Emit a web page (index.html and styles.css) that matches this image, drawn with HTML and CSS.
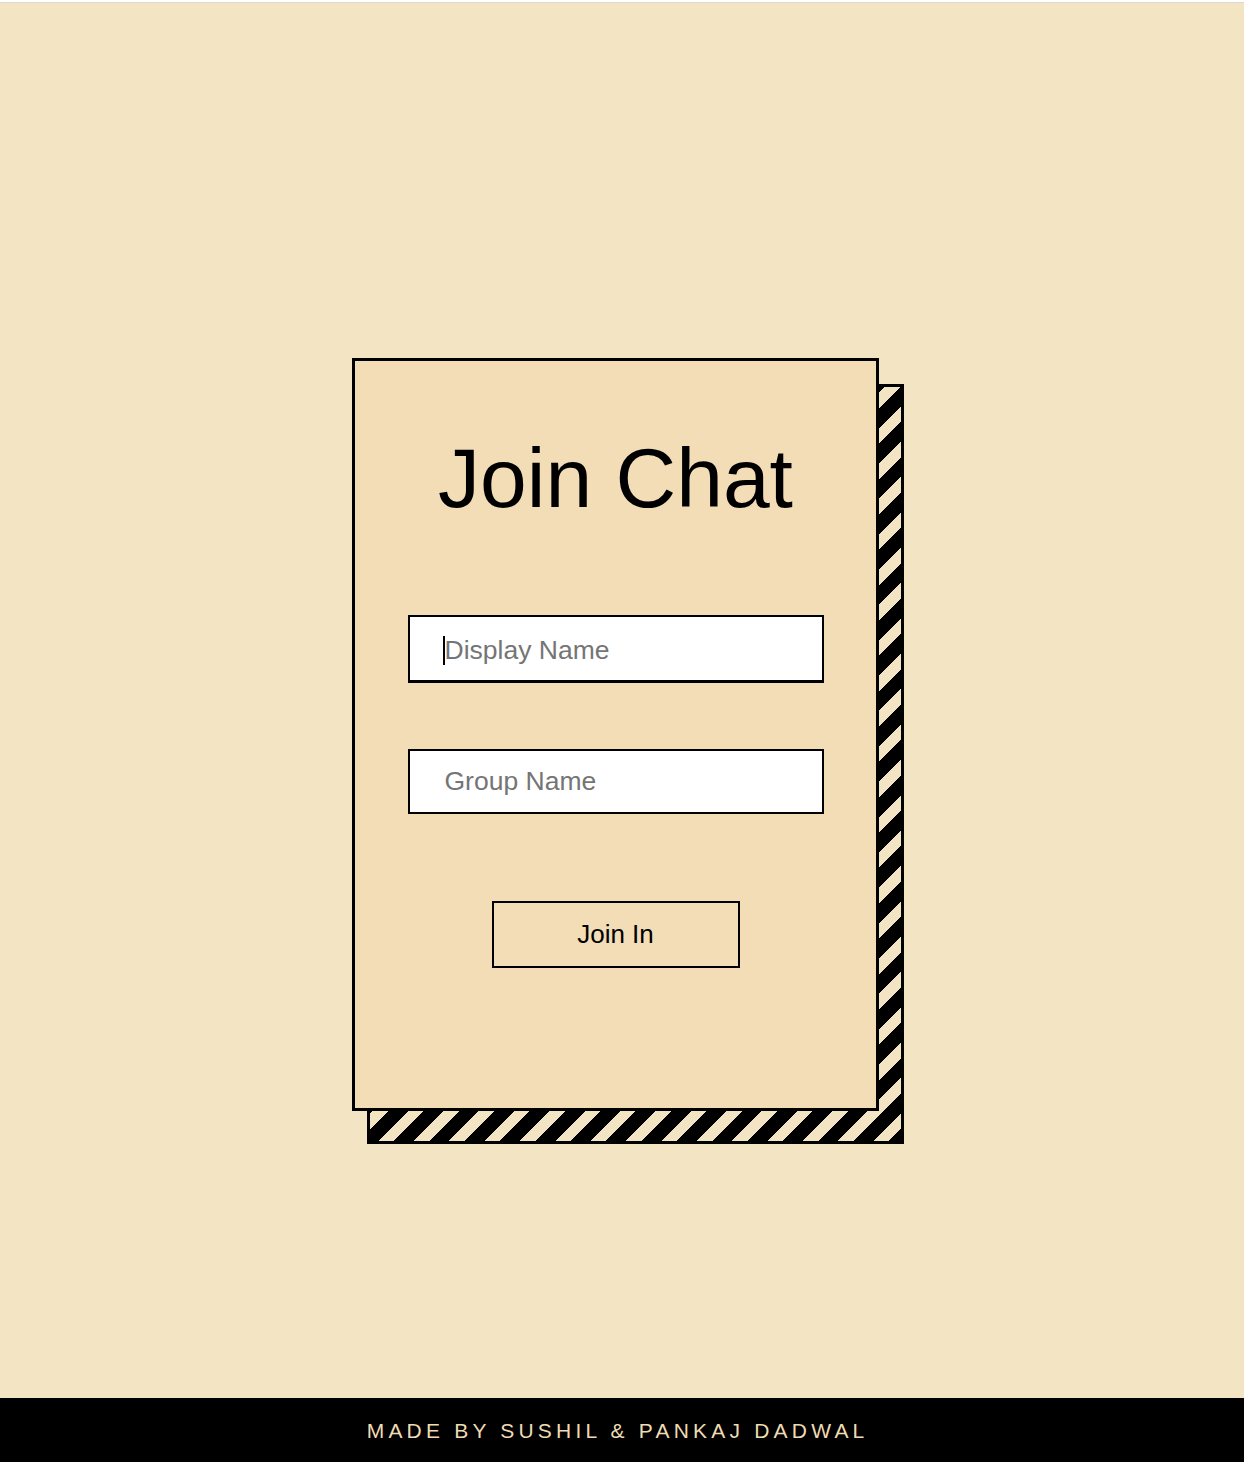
FILE: index.html
```html
<!DOCTYPE html>
<html lang="en">
<head>
<meta charset="utf-8">
<title>Join Chat</title>
<link rel="stylesheet" href="styles.css">
</head>
<body>
<div class="topline"></div>
<main class="stage">
  <div class="card-wrap">
    <div class="card-shadow"></div>
    <form class="card">
      <h1 class="title">Join Chat</h1>
      <div class="field-wrap">
        <input class="field field--focused" type="text" placeholder="Display Name">
        <span class="caret"></span>
      </div>
      <div class="field-wrap">
        <input class="field" type="text" placeholder="Group Name">
      </div>
      <button class="join-btn" type="button">Join In</button>
    </form>
  </div>
</main>
<footer class="footer"><span class="footer-text">MADE BY SUSHIL &amp; PANKAJ DADWAL</span></footer>
</body>
</html>
```

FILE: styles.css
```css
html, body {
  margin: 0;
  padding: 0;
}
body {
  background: #f3e4c4;
  font-family: "Liberation Sans", Arial, sans-serif;
  width: 1244px;
  height: 1462px;
  display: flex;
  flex-direction: column;
}
.topline {
  height: 2px;
  background: #ffffff;
  border-bottom: 1px solid #d9d9d9;
  flex: none;
}
.stage {
  flex: 1;
  display: flex;
  justify-content: center;
  align-items: flex-start;
  padding-top: 355px;
  padding-right: 13px;
}
.card-wrap {
  position: relative;
  width: 527px;
}
.card-shadow {
  position: absolute;
  top: 26px;
  left: 15px;
  right: -25px;
  bottom: -33px;
  border: 3px solid #000;
  background: repeating-linear-gradient(135deg, #000 0 14px, #f3e4c4 14px 25px);
}
.card {
  position: relative;
  box-sizing: border-box;
  height: 753px;
  border: 3px solid #000;
  background: #f2ddb7;
  display: flex;
  flex-direction: column;
  align-items: center;
  padding-top: 75px;
}
.title {
  margin: 0;
  font-weight: 400;
  font-size: 84px;
  line-height: 84px;
  color: #000;
}
.field-wrap {
  position: relative;
  width: 416px;
}
.field-wrap:first-of-type {
  margin-top: 95px;
}
.field-wrap + .field-wrap {
  margin-top: 66px;
}
.field {
  display: block;
  box-sizing: border-box;
  width: 416px;
  height: 65px;
  margin: 0;
  border: 2px solid #000;
  background: #fff;
  padding: 0 0 0 35px;
  font-family: "Liberation Sans", Arial, sans-serif;
  font-size: 26.5px;
  color: #000;
  outline: none;
}
.field--focused {
  height: 68px;
  border-bottom-width: 3px;
  padding-top: 3px;
}
.field::placeholder {
  color: #757575;
}
.caret {
  position: absolute;
  left: 35px;
  top: 21px;
  width: 2px;
  height: 29px;
  background: #000;
}
.join-btn {
  margin-top: 87px;
  box-sizing: border-box;
  width: 248px;
  height: 67px;
  border: 2px solid #000;
  background: transparent;
  font-family: "Liberation Sans", Arial, sans-serif;
  font-size: 26px;
  color: #000;
  padding: 0;
}
.footer {
  flex: none;
  height: 64px;
  background: #000;
  color: #efdcb3;
  display: flex;
  align-items: center;
  justify-content: center;
  font-size: 21px;
  padding-top: 2px;
  padding-right: 13px;
  box-sizing: border-box;
}
.footer-text {
  letter-spacing: 4.2px;
  margin-right: -4.2px;
}
```
